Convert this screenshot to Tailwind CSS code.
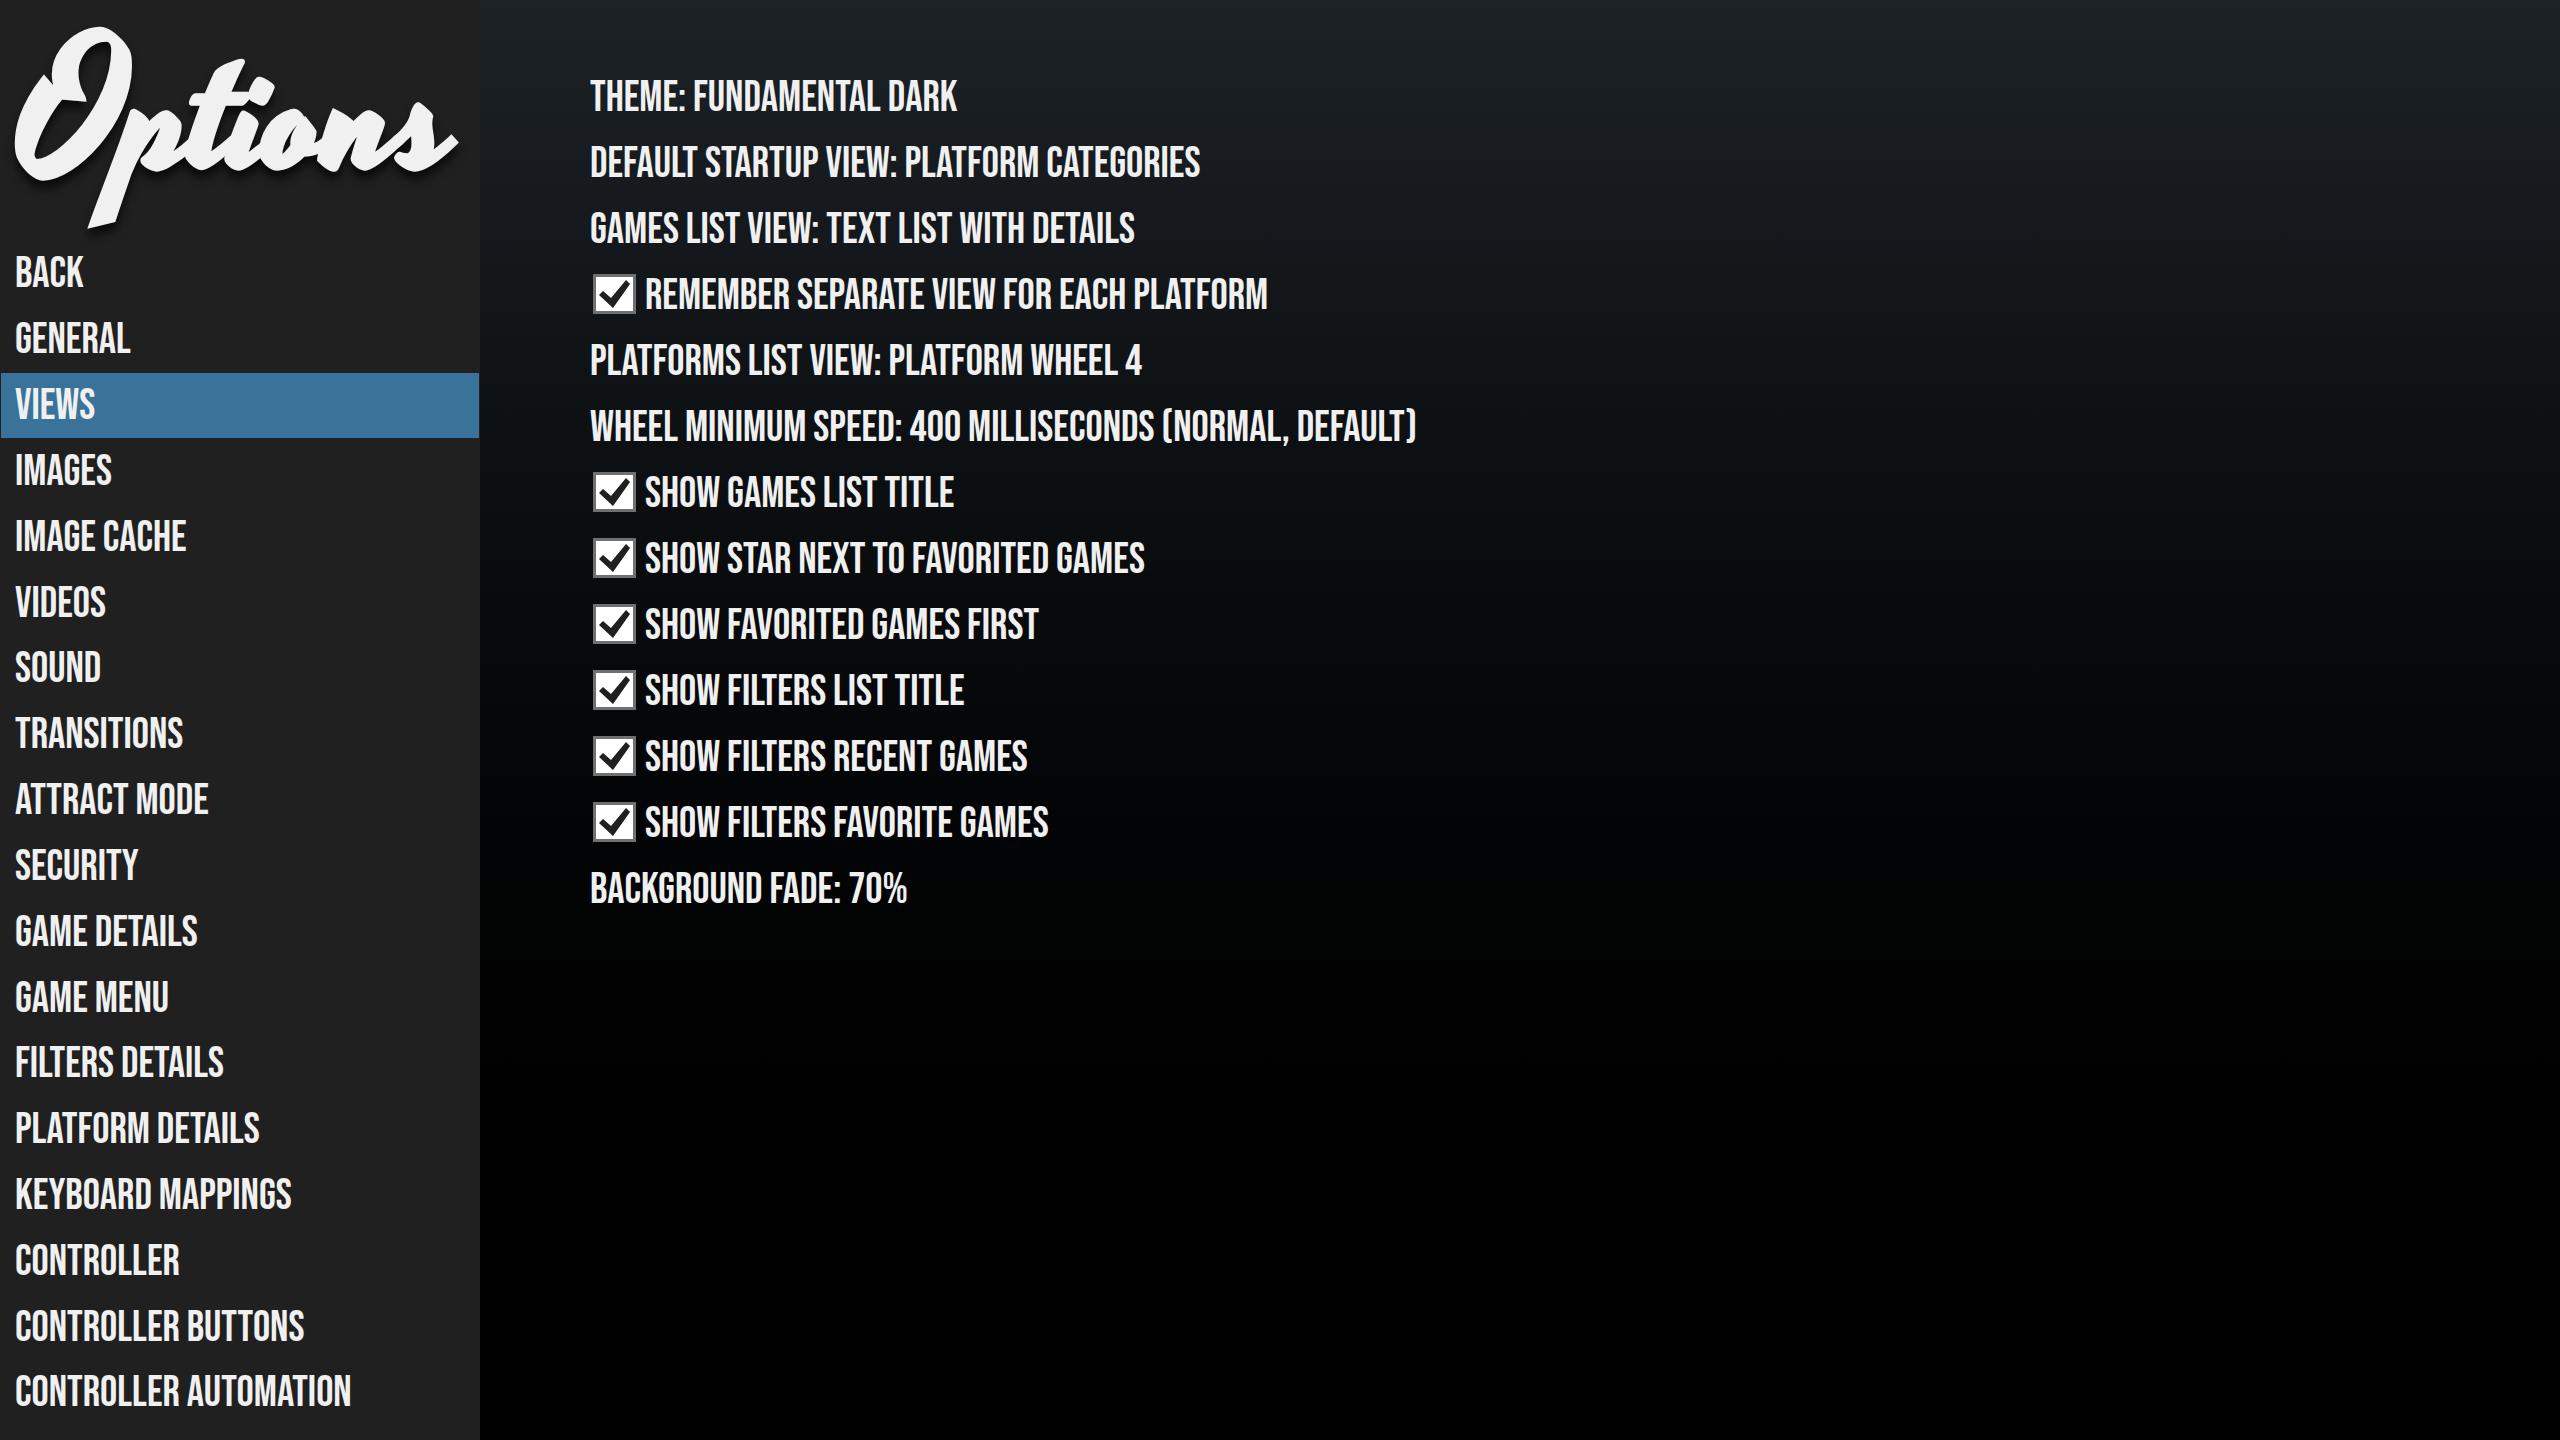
<!DOCTYPE html>
<html lang="en">
  <head>
    <meta charset="UTF-8" />
    <meta name="viewport" content="width=device-width, initial-scale=1.0" />
    <script src="https://cdn.jsdelivr.net/npm/@tailwindcss/browser@4"></script>
    <title>Options</title>
  </head>
  <body
    class="flex min-h-screen bg-black font-['Bebas_Neue','Open_Sans_Condensed','Liberation_Sans',sans-serif] text-[43px] leading-none text-[#f0f0f0] uppercase"
  >
    <aside class="flex w-[480px] shrink-0 flex-col bg-[#202020] pb-[14px]">
      <h1
        class="flex h-[241px] items-center pl-5 font-['Yesteryear','Lato',cursive] text-[174px] leading-[240px] font-bold normal-case text-shadow-[0_8px_10px_#000000b0]"
      >
        Options
      </h1>
      <nav class="flex flex-1 flex-col px-px">
        <a href="#" class="flex flex-1 items-center pt-0.5 pl-[14px]">Back</a>
        <a href="#" class="flex flex-1 items-center pt-0.5 pl-[14px]">General</a>
        <a href="#" aria-current="page" class="flex flex-1 items-center bg-[#3a7399] pt-0.5 pl-[14px]">Views</a>
        <a href="#" class="flex flex-1 items-center pt-0.5 pl-[14px]">Images</a>
        <a href="#" class="flex flex-1 items-center pt-0.5 pl-[14px]">Image Cache</a>
        <a href="#" class="flex flex-1 items-center pt-0.5 pl-[14px]">Videos</a>
        <a href="#" class="flex flex-1 items-center pt-0.5 pl-[14px]">Sound</a>
        <a href="#" class="flex flex-1 items-center pt-0.5 pl-[14px]">Transitions</a>
        <a href="#" class="flex flex-1 items-center pt-0.5 pl-[14px]">Attract Mode</a>
        <a href="#" class="flex flex-1 items-center pt-0.5 pl-[14px]">Security</a>
        <a href="#" class="flex flex-1 items-center pt-0.5 pl-[14px]">Game Details</a>
        <a href="#" class="flex flex-1 items-center pt-0.5 pl-[14px]">Game Menu</a>
        <a href="#" class="flex flex-1 items-center pt-0.5 pl-[14px]">Filters Details</a>
        <a href="#" class="flex flex-1 items-center pt-0.5 pl-[14px]">Platform Details</a>
        <a href="#" class="flex flex-1 items-center pt-0.5 pl-[14px]">Keyboard Mappings</a>
        <a href="#" class="flex flex-1 items-center pt-0.5 pl-[14px]">Controller</a>
        <a href="#" class="flex flex-1 items-center pt-0.5 pl-[14px]">Controller Buttons</a>
        <a href="#" class="flex flex-1 items-center pt-0.5 pl-[14px]">Controller Automation</a>
      </nav>
    </aside>

    <main
      class="flex flex-1 flex-col bg-[linear-gradient(#1d2227,#0f1316_26%,#0a0b0d_40%,#030405_58%,#010201_70%,#000_85%)] pt-[63px] pl-[110px]"
    >
      <button type="button" class="flex h-[66px] items-center pt-1 uppercase">Theme: Fundamental Dark</button>
      <button type="button" class="flex h-[66px] items-center pt-1 uppercase">Default Startup View: Platform Categories</button>
      <button type="button" class="flex h-[66px] items-center pt-1 uppercase">Games List View: Text List With Details</button>
      <label class="flex h-[66px] items-center gap-[9px] pl-[3px]">
        <span class="grid">
          <input type="checkbox" checked class="peer col-start-1 row-start-1 h-10 w-[43px] appearance-none border-3 border-[#707070] bg-white" />
          <svg class="pointer-events-none invisible col-start-1 row-start-1 h-10 w-[43px] peer-checked:visible" viewBox="0 0 43 40" fill="#202020">
            <path d="M6 21 10 17 18 24 33 6 37 10 20 34Z" />
          </svg>
        </span>
        <span class="pt-1">Remember Separate View For Each Platform</span>
      </label>
      <button type="button" class="flex h-[66px] items-center pt-1 uppercase">Platforms List View: Platform Wheel 4</button>
      <button type="button" class="flex h-[66px] items-center pt-1 uppercase">Wheel Minimum Speed: 400 Milliseconds (Normal, Default)</button>
      <label class="flex h-[66px] items-center gap-[9px] pl-[3px]">
        <span class="grid">
          <input type="checkbox" checked class="peer col-start-1 row-start-1 h-10 w-[43px] appearance-none border-3 border-[#707070] bg-white" />
          <svg class="pointer-events-none invisible col-start-1 row-start-1 h-10 w-[43px] peer-checked:visible" viewBox="0 0 43 40" fill="#202020">
            <path d="M6 21 10 17 18 24 33 6 37 10 20 34Z" />
          </svg>
        </span>
        <span class="pt-1">Show Games List Title</span>
      </label>
      <label class="flex h-[66px] items-center gap-[9px] pl-[3px]">
        <span class="grid">
          <input type="checkbox" checked class="peer col-start-1 row-start-1 h-10 w-[43px] appearance-none border-3 border-[#707070] bg-white" />
          <svg class="pointer-events-none invisible col-start-1 row-start-1 h-10 w-[43px] peer-checked:visible" viewBox="0 0 43 40" fill="#202020">
            <path d="M6 21 10 17 18 24 33 6 37 10 20 34Z" />
          </svg>
        </span>
        <span class="pt-1">Show Star Next To Favorited Games</span>
      </label>
      <label class="flex h-[66px] items-center gap-[9px] pl-[3px]">
        <span class="grid">
          <input type="checkbox" checked class="peer col-start-1 row-start-1 h-10 w-[43px] appearance-none border-3 border-[#707070] bg-white" />
          <svg class="pointer-events-none invisible col-start-1 row-start-1 h-10 w-[43px] peer-checked:visible" viewBox="0 0 43 40" fill="#202020">
            <path d="M6 21 10 17 18 24 33 6 37 10 20 34Z" />
          </svg>
        </span>
        <span class="pt-1">Show Favorited Games First</span>
      </label>
      <label class="flex h-[66px] items-center gap-[9px] pl-[3px]">
        <span class="grid">
          <input type="checkbox" checked class="peer col-start-1 row-start-1 h-10 w-[43px] appearance-none border-3 border-[#707070] bg-white" />
          <svg class="pointer-events-none invisible col-start-1 row-start-1 h-10 w-[43px] peer-checked:visible" viewBox="0 0 43 40" fill="#202020">
            <path d="M6 21 10 17 18 24 33 6 37 10 20 34Z" />
          </svg>
        </span>
        <span class="pt-1">Show Filters List Title</span>
      </label>
      <label class="flex h-[66px] items-center gap-[9px] pl-[3px]">
        <span class="grid">
          <input type="checkbox" checked class="peer col-start-1 row-start-1 h-10 w-[43px] appearance-none border-3 border-[#707070] bg-white" />
          <svg class="pointer-events-none invisible col-start-1 row-start-1 h-10 w-[43px] peer-checked:visible" viewBox="0 0 43 40" fill="#202020">
            <path d="M6 21 10 17 18 24 33 6 37 10 20 34Z" />
          </svg>
        </span>
        <span class="pt-1">Show Filters Recent Games</span>
      </label>
      <label class="flex h-[66px] items-center gap-[9px] pl-[3px]">
        <span class="grid">
          <input type="checkbox" checked class="peer col-start-1 row-start-1 h-10 w-[43px] appearance-none border-3 border-[#707070] bg-white" />
          <svg class="pointer-events-none invisible col-start-1 row-start-1 h-10 w-[43px] peer-checked:visible" viewBox="0 0 43 40" fill="#202020">
            <path d="M6 21 10 17 18 24 33 6 37 10 20 34Z" />
          </svg>
        </span>
        <span class="pt-1">Show Filters Favorite Games</span>
      </label>
      <button type="button" class="flex h-[66px] items-center pt-1 uppercase">Background Fade: 70%</button>
    </main>
  </body>
</html>
